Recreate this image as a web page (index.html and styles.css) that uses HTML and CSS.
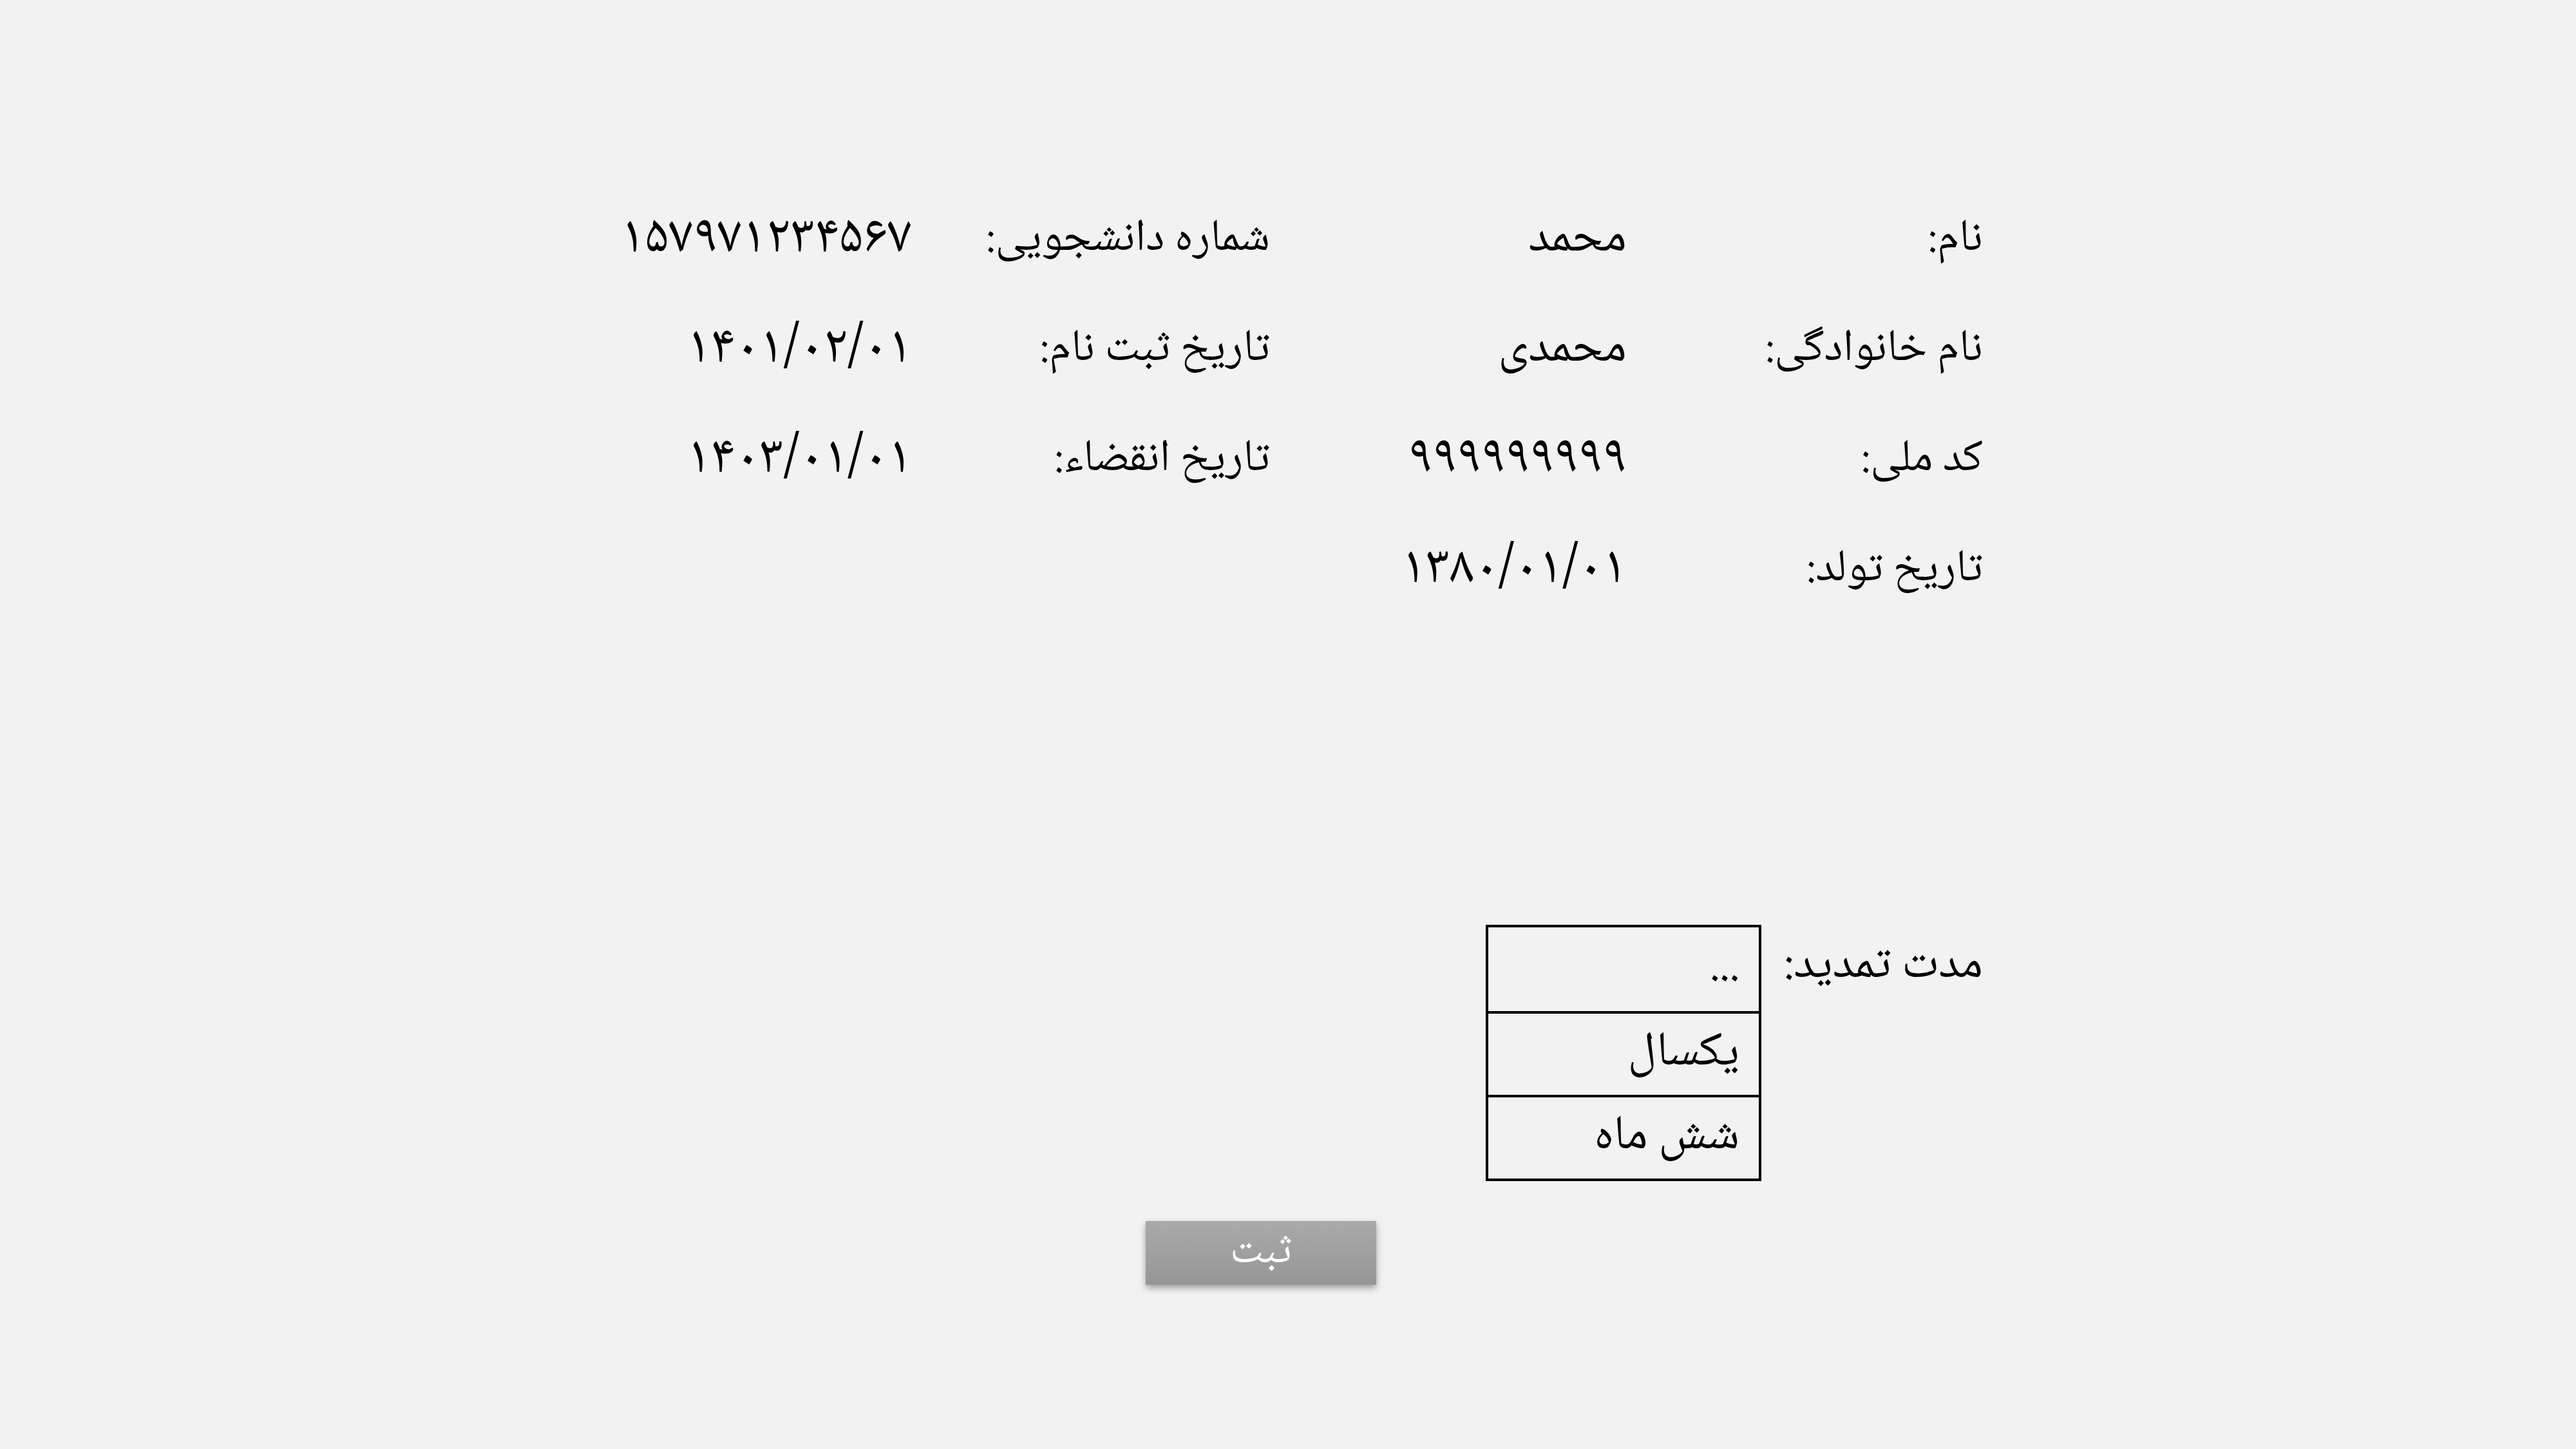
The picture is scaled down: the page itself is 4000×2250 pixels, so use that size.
FILE: index.html
```html
<!DOCTYPE html>
<html lang="fa" dir="rtl">
<head>
<meta charset="utf-8">
<title>تمدید</title>
<link rel="stylesheet" href="styles.css">
</head>
<body>
<main class="page">
  <section class="info">
    <div class="label">نام:</div>
    <div class="value">محمد</div>
    <div class="label">شماره دانشجویی:</div>
    <div class="value num">۱۵۷۹۷۱۲۳۴۵۶۷</div>

    <div class="label">نام خانوادگی:</div>
    <div class="value">محمدی</div>
    <div class="label">تاریخ ثبت نام:</div>
    <div class="value num">۱۴۰۱/۰۲/۰۱</div>

    <div class="label">کد ملی:</div>
    <div class="value num">۹۹۹۹۹۹۹۹۹</div>
    <div class="label">تاریخ انقضاء:</div>
    <div class="value num">۱۴۰۳/۰۱/۰۱</div>

    <div class="label">تاریخ تولد:</div>
    <div class="value num">۱۳۸۰/۰۱/۰۱</div>
    <div></div>
    <div></div>
  </section>

  <section class="renew">
    <div class="renew-label">مدت تمدید:</div>
    <div class="options">
      <div class="option">...</div>
      <div class="option">یکسال</div>
      <div class="option">شش ماه</div>
    </div>
  </section>

  <div class="actions">
    <button class="submit" type="button">ثبت</button>
  </div>
</main>
</body>
</html>
```
FILE: styles.css
```css
html, body {
  margin: 0;
  padding: 0;
  background: #f2f2f2;
}
body {
  width: 4000px;
  height: 2250px;
  overflow: hidden;
  font-family: "Noto Naskh Arabic", "DejaVu Sans", sans-serif;
  color: #000;
  direction: rtl;
}
.page {
  padding: 287px 921px 0 0;
}
.info {
  display: grid;
  grid-template-columns: 553px 554px 556px auto;
  grid-auto-rows: 171px;
  font-size: 76px;
  line-height: 171px;
}
.label, .value {
  white-space: nowrap;
  text-align: right;
}
.label {
  font-size: 70px;
}
.num {
  font-size: 84px;
}
.renew {
  margin-top: 465px;
  display: flex;
  align-items: flex-start;
}
.renew-label {
  width: 344px;
  flex: none;
  font-size: 74px;
  line-height: 131px;
  white-space: nowrap;
}
.options {
  width: 428px;
  border: 4px solid #000;
  box-sizing: border-box;
}
.option {
  height: 130px;
  line-height: 126px;
  font-size: 75px;
  padding-right: 30px;
  box-sizing: border-box;
}
.option + .option {
  border-top: 4px solid #000;
}
.actions {
  margin-top: 62px;
  padding-right: 942px;
}
.submit {
  width: 358px;
  height: 99px;
  border: none;
  padding: 0;
  background: linear-gradient(#aaaaaa, #969696);
  box-shadow: 0 5px 10px rgba(0,0,0,0.35);
  color: #fff;
  font-family: "Noto Naskh Arabic", "DejaVu Sans", sans-serif;
  font-size: 66px;
  line-height: 97px;
}
```
